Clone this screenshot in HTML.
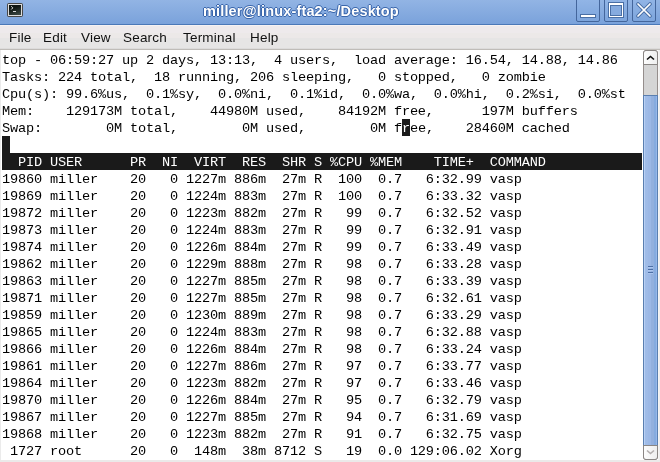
<!DOCTYPE html>
<html><head><meta charset="utf-8"><style>
*{margin:0;padding:0;box-sizing:border-box}
html,body{width:660px;height:462px;overflow:hidden;background:#fff}
body{position:relative;font-family:"Liberation Sans",sans-serif}
.a{position:absolute}
#title{left:0;top:0;width:660px;height:25px;background:linear-gradient(#92b4e4,#7aa2db);border-bottom:1px solid #4a78b8}
#ttxt{left:203px;top:1px;line-height:20px;color:#fff;font-weight:bold;font-size:14.5px;letter-spacing:0.15px;text-shadow:1px 0 0 #3a66ab,-1px 0 0 #3a66ab,0 1px 0 #3a66ab,0 -1px 0 #3a66ab,0 0 1px #1f4a8a}
#icon{left:7px;top:3px;width:16px;height:14px;background:#474747;border-radius:2px}
#icon .b{left:1px;top:1px;width:14px;height:12px;background:#dcdcdc}
#icon .c{left:2px;top:2px;width:12px;height:10px;background:linear-gradient(160deg,#0e1512 30%,#3f4c47)}
.btn{top:-3px;width:24px;height:25px;border:1px solid #44669c;border-radius:0 0 2px 2px;background:linear-gradient(#93b6e7,#7da5dc)}
#menu{left:0;top:25px;width:660px;height:25px;background:linear-gradient(#f6f2f3 0,#f6f2f3 1px,#eeeaec 1px,#eeeaec 8px,#ece9e8 8px,#ece8e8 13px,#e6e5e5 13px,#e6e5e5 23px,#dcdbdb 23px);border-bottom:1px solid #bfbcb8}
.mi{top:5px;font-size:13.5px;letter-spacing:0.2px;color:#111;line-height:16px}
#lb{left:0;top:50px;width:1px;height:412px;background:#ebebeb}
.r{position:absolute;left:2px;height:17px;line-height:17px;white-space:pre;font-family:"Liberation Mono",monospace;font-size:13.6px;letter-spacing:-0.16px;color:#000}
.hd{background:#1a1a1a;color:#fff;width:640px}
.t{position:relative;top:1px}
.r,.mi,#ttxt{will-change:transform}
.inv{color:#fff;font-weight:normal}
#invb{left:402px;top:119px;width:8px;height:17px;background:#1a1a1a}
#cur{left:2px;top:136px;width:8px;height:17px;background:#1a1a1a}
#sb{left:643px;top:50px;width:15px;height:410px;background:#d5d5d5;border:1px solid #958e8c;border-radius:3px}
#up{left:643px;top:50px;width:15px;height:15px;background:linear-gradient(90deg,#fdfdfd,#eeeeee);border:1px solid #8a8684;border-radius:3px 3px 0 0}
#dn{left:643px;top:445px;width:15px;height:15px;background:linear-gradient(90deg,#fdfdfd,#eeeeee);border:1px solid #8a8684;border-radius:0 0 3px 3px}
#thumb{left:643px;top:95px;width:15px;height:351px;background:linear-gradient(90deg,#b9d1f5 0,#b9d1f5 1px,#a0bde8 1px,#9fbbe7 4px,#9cb9e6 4px,#9cb8e6 7px,#93b0de 7px,#93b0de 10px,#86abdf 10px,#86abdf 12px,#96b7ea 12px);border:1px solid #5a7fb0}
.grip{left:648px;width:5px;height:1px;background:#4c6fa6;box-shadow:0 1px 0 #abc5ee}
#bot{left:0;top:460px;width:660px;height:2px;background:#ebe9e9}
#rb{left:658px;top:50px;width:2px;height:412px;background:linear-gradient(90deg,#f6f4f3 50%,#efefef 50%)}
</style></head><body>
<div id="title" class="a">
 <div id="icon" class="a"><div class="a b"></div><div class="a c"></div>
  <svg class="a" style="left:0;top:0" width="16" height="14"><path d="M4.2 3.3 L5.8 4.9 L4.2 6.5" stroke="#e8e8e8" stroke-width="1" fill="none"/><rect x="6" y="8" width="3" height="1" fill="#d8d8d8"/></svg>
 </div>
 <div id="ttxt" class="a">miller@linux-fta2:~/Desktop</div>
 <div class="a btn" style="left:576px"><div class="a" style="left:3px;top:16px;width:16px;height:4px;background:#fff;border:1px solid #4a6fa5"></div></div>
 <div class="a btn" style="left:604px"><svg class="a" style="left:3px;top:4px" width="16" height="16"><rect x="0" y="0" width="16" height="16" fill="#4a6fa5"/><rect x="1" y="1" width="14" height="14" fill="#fff"/><rect x="2" y="3" width="12" height="11" fill="#4a6fa5"/><rect x="3" y="4" width="10" height="9" fill="#86abdf"/></svg></div>
 <div class="a btn" style="left:632px"><svg class="a" style="left:3px;top:4px" width="17" height="17"><path d="M2 2 L14 14 M14 2 L2 14" stroke="#4a6fa5" stroke-width="3.6" stroke-linecap="round"/><path d="M2 2 L14 14 M14 2 L2 14" stroke="#fff" stroke-width="1.7" stroke-linecap="round"/></svg></div>
</div>
<div id="menu" class="a">
<span class="a mi" style="left:9px">File</span>
<span class="a mi" style="left:43px">Edit</span>
<span class="a mi" style="left:81px">View</span>
<span class="a mi" style="left:123px">Search</span>
<span class="a mi" style="left:183px">Terminal</span>
<span class="a mi" style="left:250px">Help</span>
</div>
<div id="lb" class="a"></div>
<div id="invb" class="a"></div>
<div class="r" style="top:51px"><span class="t">top - 06:59:27 up 2 days, 13:13,  4 users,  load average: 16.54, 14.88, 14.86</span></div>
<div class="r" style="top:68px"><span class="t">Tasks: 224 total,  18 running, 206 sleeping,   0 stopped,   0 zombie</span></div>
<div class="r" style="top:85px"><span class="t">Cpu(s): 99.6%us,  0.1%sy,  0.0%ni,  0.1%id,  0.0%wa,  0.0%hi,  0.2%si,  0.0%st</span></div>
<div class="r" style="top:102px"><span class="t">Mem:    129173M total,    44980M used,    84192M free,      197M buffers</span></div>
<div class="r" style="top:119px"><span class="t">Swap:        0M total,        0M used,        0M f<b class="inv">r</b>ee,    28460M cached</span></div>
<div class="r hd" style="top:153px"><span class="t">  PID USER      PR  NI  VIRT  RES  SHR S %CPU %MEM    TIME+  COMMAND</span></div>
<div class="r" style="top:170px"><span class="t">19860 miller    20   0 1227m 886m  27m R  100  0.7   6:32.99 vasp</span></div>
<div class="r" style="top:187px"><span class="t">19869 miller    20   0 1224m 883m  27m R  100  0.7   6:33.32 vasp</span></div>
<div class="r" style="top:204px"><span class="t">19872 miller    20   0 1223m 882m  27m R   99  0.7   6:32.52 vasp</span></div>
<div class="r" style="top:221px"><span class="t">19873 miller    20   0 1224m 883m  27m R   99  0.7   6:32.91 vasp</span></div>
<div class="r" style="top:238px"><span class="t">19874 miller    20   0 1226m 884m  27m R   99  0.7   6:33.49 vasp</span></div>
<div class="r" style="top:255px"><span class="t">19862 miller    20   0 1229m 888m  27m R   98  0.7   6:33.28 vasp</span></div>
<div class="r" style="top:272px"><span class="t">19863 miller    20   0 1227m 885m  27m R   98  0.7   6:33.39 vasp</span></div>
<div class="r" style="top:289px"><span class="t">19871 miller    20   0 1227m 885m  27m R   98  0.7   6:32.61 vasp</span></div>
<div class="r" style="top:306px"><span class="t">19859 miller    20   0 1230m 889m  27m R   98  0.7   6:33.29 vasp</span></div>
<div class="r" style="top:323px"><span class="t">19865 miller    20   0 1224m 883m  27m R   98  0.7   6:32.88 vasp</span></div>
<div class="r" style="top:340px"><span class="t">19866 miller    20   0 1226m 884m  27m R   98  0.7   6:33.24 vasp</span></div>
<div class="r" style="top:357px"><span class="t">19861 miller    20   0 1227m 886m  27m R   97  0.7   6:33.77 vasp</span></div>
<div class="r" style="top:374px"><span class="t">19864 miller    20   0 1223m 882m  27m R   97  0.7   6:33.46 vasp</span></div>
<div class="r" style="top:391px"><span class="t">19870 miller    20   0 1226m 884m  27m R   95  0.7   6:32.79 vasp</span></div>
<div class="r" style="top:408px"><span class="t">19867 miller    20   0 1227m 885m  27m R   94  0.7   6:31.69 vasp</span></div>
<div class="r" style="top:425px"><span class="t">19868 miller    20   0 1223m 882m  27m R   91  0.7   6:32.75 vasp</span></div>
<div class="r" style="top:442px"><span class="t"> 1727 root      20   0  148m  38m 8712 S   19  0.0 129:06.02 Xorg</span></div>
<div id="cur" class="a"></div>
<div id="sb" class="a"></div>
<div id="thumb" class="a"></div>
<div class="a grip" style="top:266px"></div>
<div class="a grip" style="top:269px"></div>
<div class="a grip" style="top:272px"></div>
<div id="up" class="a"><svg class="a" style="left:2px;top:4px" width="9" height="6"><path d="M1 4.5 L4.5 1.5 L8 4.5" stroke="#111" stroke-width="1.6" fill="none"/></svg></div>
<div id="dn" class="a"><svg class="a" style="left:2px;top:3px" width="9" height="6"><path d="M1 1.5 L4.5 4.5 L8 1.5" stroke="#b3aeae" stroke-width="1.6" fill="none"/></svg></div>
<div id="rb" class="a"></div>
<div id="bot" class="a"></div>
</body></html>
